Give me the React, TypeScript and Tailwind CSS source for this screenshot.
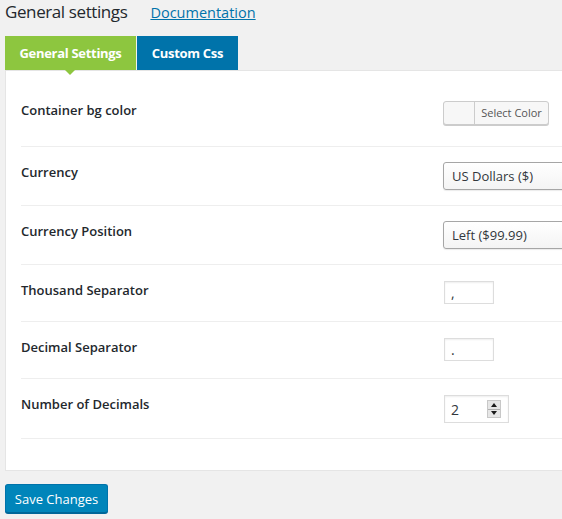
import React from "react";

function Label({ children }: { children: React.ReactNode }) {
  return (
    <div className="w-[422px] shrink-0 pt-[17px] text-[13px] leading-[17px] font-semibold text-[#23282d]">
      {children}
    </div>
  );
}

function TextBox({ value, w }: { value: string; w: string }) {
  return (
    <div
      className={`${w} h-[23px] border border-[#dddddd] bg-white shadow-[inset_0_1px_2px_rgba(0,0,0,0.07)] pl-[6px] text-[14px] leading-[21px] text-[#32373c]`}
    >
      {value}
    </div>
  );
}

function SelectBox({ value }: { value: string }) {
  return (
    <div className="w-[160px] h-[28px] rounded-[3px] border border-[#a6a6a6] bg-gradient-to-b from-white to-[#f4f4f4] shadow-[0_1px_1px_rgba(0,0,0,0.08)] pl-[8px] text-[13px] leading-[26px] text-[#32373c]">
      {value}
    </div>
  );
}

export default function App() {
  return (
    <div className="w-[562px] h-[519px] overflow-hidden bg-[#f1f1f1] font-['Open_Sans','Noto_Sans',sans-serif] text-[#23282d]">
      <div className="pl-[5px]">
        <div className="flex items-baseline h-[36px]">
          <h1 className="text-[17px] tracking-[-0.4px] leading-[24px] font-normal text-[#23282d]">General settings</h1>
          <a className="ml-[23px] text-[14.5px] leading-[24px] text-[#0073aa] underline">Documentation</a>
        </div>
        <div className="flex h-[34px]">
          <div className="relative w-[131px] pt-px bg-[#8dc63f] text-white font-bold text-[13px] tracking-[-0.3px] flex items-center justify-center">
            General Settings
            <span className="absolute left-[60px] top-full w-0 h-0 border-x-[5px] border-t-[5px] border-x-transparent border-t-[#8dc63f]" />
          </div>
          <div className="ml-px w-[101px] pt-px bg-[#0073aa] text-white font-bold text-[13px] tracking-[-0.3px] flex items-center justify-center">
            Custom Css
          </div>
        </div>
        <div className="w-[600px] h-[401px] border border-[#e5e5e5] bg-white px-[15px] pt-[14px]">
          <div className="flex h-[62px] border-b border-[#eeeeee]">
            <Label>Container bg color</Label>
            <div className="pt-[16px]">
              <div className="flex h-[24px] w-[106px] rounded-[3px] border border-[#cccccc] bg-[#f7f7f7] shadow-[0_1px_0_#cccccc]">
                <div className="w-[31px] border-r border-[#cccccc]" />
                <div className="flex-1 text-center text-[11px] leading-[22px] text-[#555555]">Select Color</div>
              </div>
            </div>
          </div>
          <div className="flex h-[59px] border-b border-[#eeeeee]">
            <Label>Currency</Label>
            <div className="pt-[15px]">
              <SelectBox value="US Dollars ($)" />
            </div>
          </div>
          <div className="flex h-[59px] border-b border-[#eeeeee]">
            <Label>Currency Position</Label>
            <div className="pt-[15px]">
              <SelectBox value="Left ($99.99)" />
            </div>
          </div>
          <div className="flex h-[57px] border-b border-[#eeeeee]">
            <Label>Thousand Separator</Label>
            <div className="pt-[16px] pl-px">
              <TextBox value="," w="w-[50px]" />
            </div>
          </div>
          <div className="flex h-[57px] border-b border-[#eeeeee]">
            <Label>Decimal Separator</Label>
            <div className="pt-[16px] pl-px">
              <TextBox value="." w="w-[50px]" />
            </div>
          </div>
          <div className="flex h-[60px] border-b border-[#eeeeee]">
            <Label>Number of Decimals</Label>
            <div className="pt-[16px] pl-px">
              <div className="relative flex items-center w-[65px] h-[28px] border border-[#dddddd] bg-white shadow-[inset_0_1px_2px_rgba(0,0,0,0.07)] pl-[6px] text-[14px] text-[#32373c]">
                2
                <div className="absolute left-[42px] top-[4px] w-[14px] h-[18px] flex flex-col border border-[#c8c8c8] bg-[#e6e6e6]">
                  <div className="flex-1 flex items-center justify-center border-b border-[#b0b0b0]">
                    <span className="w-0 h-0 border-x-[3px] border-b-[4px] border-x-transparent border-b-[#1a1a1a]" />
                  </div>
                  <div className="flex-1 flex items-center justify-center">
                    <span className="w-0 h-0 border-x-[3px] border-t-[4px] border-x-transparent border-t-[#1a1a1a]" />
                  </div>
                </div>
              </div>
            </div>
          </div>
        </div>
        <button className="mt-[13px] h-[29px] w-[103px] rounded-[3px] border border-[#0073aa] border-b-[#006799] bg-[#0085ba] shadow-[0_1px_0_#006799] text-[13px] leading-[26px] text-white">
          Save Changes
        </button>
      </div>
    </div>
  );
}
